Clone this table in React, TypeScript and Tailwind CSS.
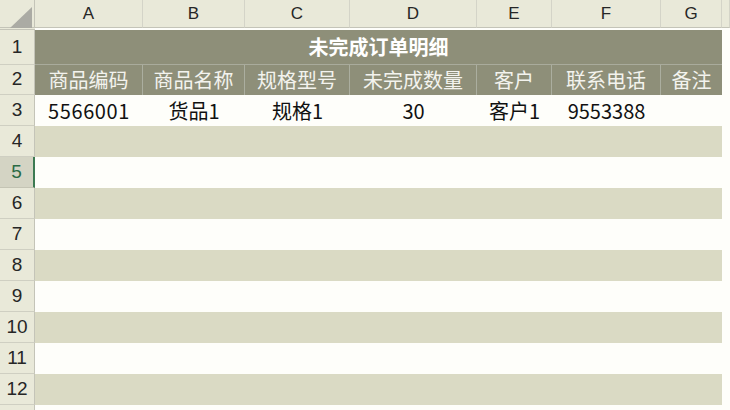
import React from "react";

const cols = ["A", "B", "C", "D", "E", "F", "G", ""];
const heads = ["商品编码", "商品名称", "规格型号", "未完成数量", "客户", "联系电话", "备注"];
const data = ["5566001", "货品1", "规格1", "30", "客户1", "9553388", ""];

const grid = "grid grid-cols-[35px_108px_102px_105px_127px_75px_109px_61px_8px]";
const cjk = { fontFamily: '"Noto Sans CJK SC", "Noto Sans", sans-serif' };
const latin = { fontFamily: '"Liberation Sans", Arial, sans-serif' };

function RowHead({ n, h, active }: { n: number | string; h: string; active?: boolean }) {
  return (
    <div
      className={`${h} flex items-center justify-center border-b border-r text-[19px] ${
        active
          ? "bg-[#d4d4c4] text-[#2a6b45] border-b-[#c4c4b4] border-r-2 border-r-[#3c7a52]"
          : "bg-[#e9e9d9] text-[#262626] border-b-[#cfcfc2] border-r-[#c4c4b8]"
      }`}
      style={latin}
    >
      {n}
    </div>
  );
}

export default function App() {
  const bodyRows = [3, 4, 5, 6, 7, 8, 9, 10, 11, 12, 13];
  return (
    <div className="w-[730px] h-[410px] overflow-hidden bg-[#fefefa]" style={cjk}>
      {/* column letters */}
      <div className={`${grid} h-[30px]`}>
        <div className="relative bg-[#e9e9d9] border-r border-b border-r-[#c4c4b8] border-b-[#c4c4b8]">
          <svg className="absolute left-0 top-0" width="35" height="30" viewBox="0 0 35 30">
            <polygon points="10,28 32,28 32,7" fill="#ababa4" />
          </svg>
        </div>
        {cols.map((c, i) => (
          <div
            key={i}
            className="flex items-center justify-center bg-[#e9e9d9] border-r border-b border-r-[#d4d4c8] border-b-[#c4c4b8] text-[17px] text-[#262626]"
            style={latin}
          >
            {c}
          </div>
        ))}
        <div className="bg-[#e9e9d9] border-b border-b-[#c4c4b8]" />
      </div>

      {/* title row */}
      <div className={`${grid} h-[35px]`}>
        <RowHead n={1} h="h-[35px]" />
        <div className="col-span-7 flex items-center justify-center bg-[#8e8f79] border-b border-b-[#a9ab9c] text-[20px] font-bold text-white">
          未完成订单明细
        </div>
        <div className="bg-[#fefefa]" />
      </div>

      {/* header row */}
      <div className={`${grid} h-[30px]`}>
        <RowHead n={2} h="h-[30px]" />
        {heads.map((t, i) => (
          <div
            key={i}
            className={`flex items-center justify-center bg-[#8e8f79] text-[20px] text-[#f3f3ee] ${
              i < 6 ? "border-r border-r-[#abae9f]" : ""
            }`}
          >
            {t}
          </div>
        ))}
        <div className="bg-[#fefefa]" />
      </div>

      {bodyRows.map((r) => {
        const band = r % 2 === 0;
        return (
          <div key={r} className={`${grid} h-[31px]`}>
            <RowHead n={r === 13 ? "" : r} h="h-[31px]" active={r === 5} />
            {Array.from({ length: 7 }).map((_, i) => (
              <div
                key={i}
                className={`flex items-center justify-center text-[20px] text-[#111] ${
                  band ? "bg-[#dadac4]" : "bg-[#fefefa]"
                } ${r === 3 && i === 0 ? "tracking-[0.6px]" : ""}`}
              >
                {r === 3 ? data[i] : ""}
              </div>
            ))}
            <div className="bg-[#fefefa]" />
          </div>
        );
      })}
    </div>
  );
}
